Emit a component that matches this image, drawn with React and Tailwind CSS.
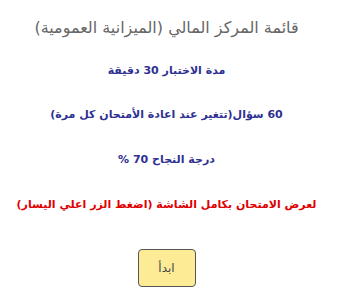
import React from 'react';

const App = () => {
  return (
    <div className="w-[341px] h-[298px] bg-white">
      <div dir="rtl" className="w-[333px] flex flex-col items-center font-['DejaVu_Sans',sans-serif]">
        <h1 className="mt-[14px] text-[16px] leading-[28px] text-[#666666] whitespace-nowrap">قائمة المركز المالي (الميزانية العمومية)</h1>
        <p className="mt-[20px] text-[11px] leading-[18px] font-bold text-[#2e3192] whitespace-nowrap">مدة الاختبار 30 دقيقة</p>
        <p className="mt-[26px] text-[11px] leading-[18px] font-bold text-[#2e3192] whitespace-nowrap">60 سؤال(تتغير عند اعادة الأمتحان كل مرة)</p>
        <p className="mt-[27px] text-[11px] leading-[18px] font-bold text-[#2e3192] whitespace-nowrap">درجة النجاح 70 %</p>
        <p className="mt-[27px] text-[11px] leading-[18px] font-bold text-[#e00000] whitespace-nowrap">لعرض الامتحان بكامل الشاشة (اضغط الزر اعلي اليسار)</p>
        <button className="mt-[35px] w-[58px] h-[38px] rounded-[4px] border border-[#555555] bg-[#fdeb95] text-[12px] text-[#444444]">ابدأ</button>
      </div>
    </div>
  );
};

export default App;
